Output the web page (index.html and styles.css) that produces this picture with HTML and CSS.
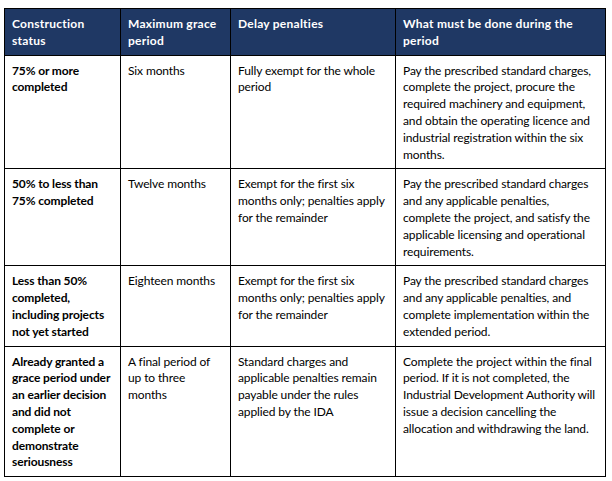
FILE: index.html
```html
<!DOCTYPE html>
<html lang="en">
<head>
<meta charset="utf-8">
<title>Grace periods</title>
<link rel="stylesheet" href="styles.css">
</head>
<body>
<table class="grace">
  <colgroup>
    <col class="c1"><col class="c2"><col class="c3"><col class="c4">
  </colgroup>
  <thead>
    <tr>
      <th>Construction status</th>
      <th>Maximum grace period</th>
      <th>Delay penalties</th>
      <th>What must be done during the period</th>
    </tr>
  </thead>
  <tbody>
    <tr>
      <td class="status">75% or more completed</td>
      <td>Six months</td>
      <td>Fully exempt for the whole period</td>
      <td>Pay the prescribed standard charges, complete the project, procure the required machinery and equipment, and obtain the operating licence and industrial registration within the six months.</td>
    </tr>
    <tr>
      <td class="status">50% to less than 75% completed</td>
      <td>Twelve months</td>
      <td>Exempt for the first six months only; penalties apply for the remainder</td>
      <td>Pay the prescribed standard charges and any applicable penalties, complete the project, and satisfy the applicable licensing and operational requirements.</td>
    </tr>
    <tr>
      <td class="status">Less than 50% completed, including projects not yet started</td>
      <td>Eighteen months</td>
      <td>Exempt for the first six months only; penalties apply for the remainder</td>
      <td>Pay the prescribed standard charges and any applicable penalties, and complete implementation within the extended period.</td>
    </tr>
    <tr>
      <td class="status">Already granted a grace period under an earlier decision and did not complete or demonstrate seriousness</td>
      <td>A final period of up to three months</td>
      <td>Standard charges and applicable penalties remain payable under the rules applied by the IDA</td>
      <td>Complete the project within the final period. If it is not completed, the Industrial Development Authority will issue a decision cancelling the allocation and withdrawing the land.</td>
    </tr>
  </tbody>
</table>
</body>
</html>
```

FILE: styles.css
```css
html, body {
  margin: 0;
  padding: 0;
  background: #ffffff;
}
body {
  padding: 8px 0 0 4px;
  font-family: "Lato", "Liberation Sans", sans-serif;
  font-size: 12px;
  line-height: 16.8px;
  letter-spacing: -0.12px;
  color: #000000;
}
.grace {
  border-collapse: collapse;
  table-layout: fixed;
  width: 601px;
}
.c1 { width: 116px; }
.c2 { width: 110px; }
.c3 { width: 165px; }
.c4 { width: 210px; }
.grace th,
.grace td {
  border: 1px solid #000000;
  padding: 7px 6px 5px 7px;
  text-align: left;
  vertical-align: top;
}
.grace th {
  background: #1f3864;
  color: #ffffff;
  font-weight: 700;
  letter-spacing: 0.25px;
}
.grace td.status {
  font-weight: 700;
}
```
